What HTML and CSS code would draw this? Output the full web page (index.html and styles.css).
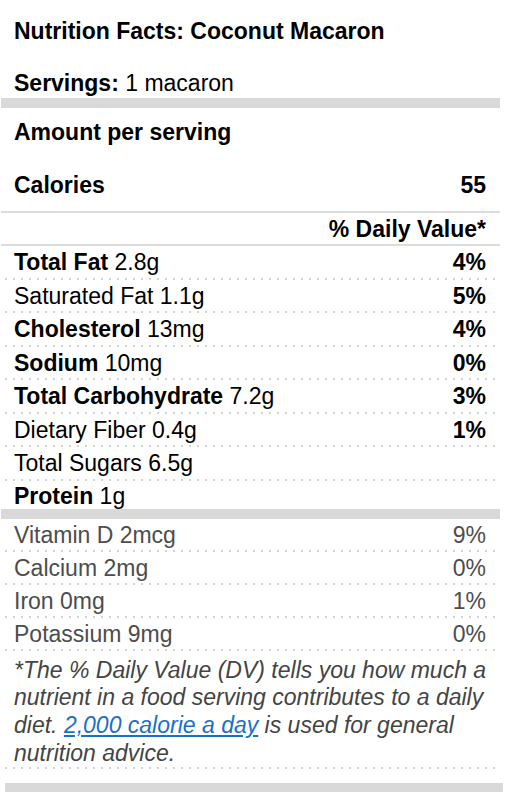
FILE: index.html
```html
<!DOCTYPE html>
<html lang="en">
<head>
    <meta charset="UTF-8">
    <meta name="viewport" content="width=device-width, initial-scale=1.0">
    <title>Nutrition Facts: Coconut Macaron</title>
    <link rel="stylesheet" href="styles.css">
</head>
<body>
    <div class="label">
        <h1 class="title">Nutrition Facts: Coconut Macaron</h1>
        <div class="servings"><b>Servings:</b> 1 macaron</div>
        <div class="bar"></div>

        <div class="amount">Amount per serving</div>
        <div class="calories">
            <span>Calories</span>
            <span>55</span>
        </div>
        <div class="line"></div>
        <div class="dv-head">% Daily Value*</div>
        <div class="line"></div>

        <div class="row"><span><b>Total Fat</b> 2.8g</span><b>4%</b></div>
        <div class="row"><span>Saturated Fat 1.1g</span><b>5%</b></div>
        <div class="row"><span><b>Cholesterol</b> 13mg</span><b>4%</b></div>
        <div class="row"><span><b>Sodium</b> 10mg</span><b>0%</b></div>
        <div class="row"><span><b>Total Carbohydrate</b> 7.2g</span><b>3%</b></div>
        <div class="row"><span>Dietary Fiber 0.4g</span><b>1%</b></div>
        <div class="row"><span>Total Sugars 6.5g</span></div>
        <div class="row row-last"><span><b>Protein</b> 1g</span></div>
        <div class="bar"></div>

        <div class="row vitamin"><span>Vitamin D 2mcg</span><span>9%</span></div>
        <div class="row vitamin"><span>Calcium 2mg</span><span>0%</span></div>
        <div class="row vitamin"><span>Iron 0mg</span><span>1%</span></div>
        <div class="row vitamin"><span>Potassium 9mg</span><span>0%</span></div>

        <p class="footnote">*The % Daily Value (DV) tells you how much a nutrient in a food serving contributes to a daily diet. <a href="#">2,000 calorie a day</a> is used for general nutrition advice.</p>
    </div>
    <div class="bottom-bar"></div>
</body>
</html>
```

FILE: styles.css
```css
body {
    margin: 0;
    font-family: "Liberation Sans", Arial, Helvetica, sans-serif;
    font-size: 23px;
    color: #000;
}
.label {
    width: 499px;
    margin-left: 1px;
}
.title {
    margin: 0;
    padding: 16px 14px 0 13px;
    font-size: 23px;
    line-height: 31px;
}
.servings {
    margin-top: 22px;
    padding: 0 14px 0 13px;
    line-height: 29px;
}
.bar {
    height: 10px;
    background-color: #d9d9d9;
}
.amount {
    margin-top: 9px;
    padding: 0 14px 0 13px;
    line-height: 31px;
    font-weight: bold;
}
.calories {
    display: flex;
    justify-content: space-between;
    margin-top: 22px;
    padding: 0 14px 10px 13px;
    line-height: 31px;
    font-weight: bold;
}
.line {
    height: 2px;
    background-color: #dcdcdc;
}
.dv-head {
    padding: 1px 14px 0 13px;
    line-height: 30px;
    font-weight: bold;
    text-align: right;
}
.row {
    display: flex;
    justify-content: space-between;
    padding: 2px 14px 2px 13px;
    line-height: 29.5px;
    background-image: linear-gradient(to right, #d2d2d2 2px, transparent 2px);
    background-size: 8px 2px;
    background-repeat: repeat-x;
    background-position: 4px bottom;
}
.row-last {
    padding-top: 3px;
    padding-bottom: 0;
    line-height: 25px;
    background: none;
}
.vitamin {
    line-height: 29px;
    color: #4d4d4d;
}
.footnote {
    margin: 0;
    padding: 6px 8px 2px 13px;
    line-height: 27.7px;
    font-style: italic;
    color: #444;
    background-image: linear-gradient(to right, #d2d2d2 2px, transparent 2px);
    background-size: 8px 2px;
    background-repeat: repeat-x;
    background-position: 4px bottom;
}
.footnote a {
    color: #1a6fc9;
}
.bottom-bar {
    width: 498px;
    height: 9px;
    margin: 14px 0 0 5px;
    background-color: #d9d9d9;
}
```
